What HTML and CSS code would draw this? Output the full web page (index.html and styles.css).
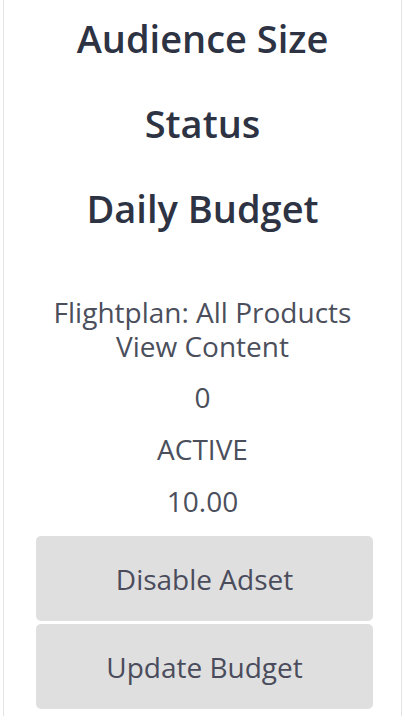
FILE: index.html
```html
<!DOCTYPE html>
<html lang="en">
<head>
    <meta charset="UTF-8">
    <meta name="viewport" content="width=device-width, initial-scale=1.0">
    <title>Adset</title>
    <link rel="stylesheet" href="styles.css">
</head>
<body>
    <div class="card">
        <div class="labels">
            <h2>Audience Size</h2>
            <h2>Status</h2>
            <h2>Daily Budget</h2>
        </div>
        <div class="values">
            <p class="name">Flightplan: All Products<br>View Content</p>
            <p>0</p>
            <p>ACTIVE</p>
            <p>10.00</p>
        </div>
        <div class="actions">
            <button type="button">Disable Adset</button>
            <button type="button">Update Budget</button>
        </div>
    </div>
</body>
</html>
```

FILE: styles.css
```css
body {
    margin: 0;
    font-family: "Open Sans", sans-serif;
    background: #fff;
}
.card {
    margin: 0 3px;
    height: 720px;
    border-left: 1px solid #e3e3e3;
    border-right: 1px solid #e3e3e3;
    text-align: center;
}
.labels {
    margin-top: -4px;
}
.labels h2 {
    margin: 0;
    height: 85px;
    line-height: 85px;
    font-size: 38px;
    font-weight: 600;
    color: #2d3343;
}
.values {
    padding-top: 44px;
    color: #4b4f5c;
    font-size: 28px;
}
.values p {
    margin: 0;
    line-height: 52px;
}
.values .name {
    line-height: 34px;
    margin-bottom: 8px;
}
.actions {
    display: flex;
    flex-direction: column;
    gap: 3px;
    padding: 9px 28px 0 32px;
}
button {
    height: 85px;
    border: none;
    border-radius: 5px;
    background-color: #dfdfdf;
    color: #4a4c5c;
    font-family: inherit;
    font-size: 28px;
}
```
